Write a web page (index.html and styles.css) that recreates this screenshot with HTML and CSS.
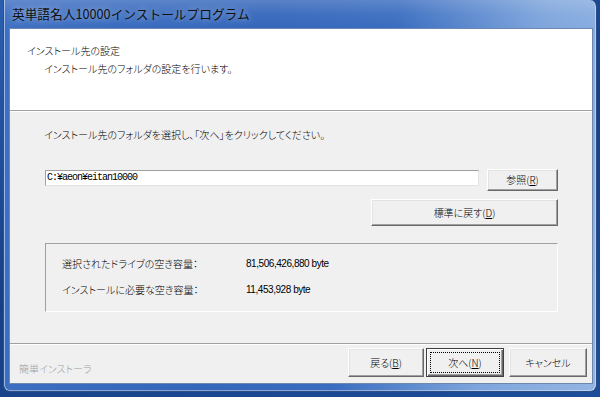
FILE: index.html
```html
<!DOCTYPE html>
<html lang="ja">
<head>
<meta charset="utf-8">
<link rel="stylesheet" href="styles.css">
</head>
<body>
<div class="window">
  <div class="titlebar">英単語名人10000インストールプログラム</div>
  <div class="client">
    <div class="header">
      <div class="h-title">インストール先の設定</div>
      <div class="h-sub">インストール先のフォルダの設定を行います。</div>
    </div>
    <div class="main">
      <div class="instr">インストール先のフォルダを選択し、「次へ」をクリックしてください。</div>
      <div class="path-row">
        <div class="path-input">C:¥aeon¥eitan10000</div>
        <div class="btn btn-browse">参照(<u>R</u>)</div>
      </div>
      <div class="default-row">
        <div class="btn btn-default">標準に戻す(<u>D</u>)</div>
      </div>
      <div class="group">
        <div class="g-row"><span class="g-label">選択されたドライブの空き容量：</span><span class="g-val">81,506,426,880 byte</span></div>
        <div class="g-row"><span class="g-label">インストールに必要な空き容量：</span><span class="g-val">11,453,928 byte</span></div>
      </div>
    </div>
    <div class="footer">
      <div class="brand">簡単インストーラ</div>
      <div class="buttons">
        <div class="btn btn-nav">戻る(<u>B</u>)</div>
        <div class="btn btn-nav btn-focus"><span class="focus">次へ(<u>N</u>)</span></div>
        <div class="btn btn-nav btn-cancel">キャンセル</div>
      </div>
    </div>
  </div>
</div>
</body>
</html>
```
FILE: styles.css
```css
html, body {
  margin: 0;
  padding: 0;
  width: 600px;
  height: 397px;
  overflow: hidden;
}
body {
  background: linear-gradient(160deg, #2a5fb0 0%, #163f86 50%, #1d4d9a 100%);
  padding-left: 3px;
  box-sizing: border-box;
  font-family: "Noto Sans CJK JP", sans-serif;
  font-feature-settings: "palt";
  font-size: 10px;
  font-weight: 300;
  color: #000;
}
.window {
  width: 594px;
  height: 392px;
  box-sizing: border-box;
  border-radius: 0 7px 7px 7px;
  border: 1px solid #2b4f86;
  border-top: none;
  background:
    linear-gradient(to bottom, rgba(255,255,255,0.18) 0px, rgba(255,255,255,0.05) 14px, rgba(0,0,0,0) 29px),
    linear-gradient(100deg, #3f70c3 0%, #3466ba 40%, #3a6dc0 60%, #7ea5dc 82%, #93b5e4 100%);
  box-shadow: inset 1px 0 0 rgba(255,255,255,0.5), inset -1px 0 0 rgba(255,255,255,0.4), inset 0 -1px 0 rgba(255,255,255,0.4);
  display: flex;
  flex-direction: column;
  padding: 0 4px 8px 6px;
}
.titlebar {
  height: 29px;
  flex: none;
  line-height: 28px;
  padding-left: 2px;
  font-size: 12.7px;
  font-weight: 400;
  font-feature-settings: normal;
  color: #101010;
  text-shadow: 0 0 6px rgba(255,255,255,0.6);
}
.client {
  flex: 1;
  background: #f0f0f0;
  display: flex;
  flex-direction: column;
  box-shadow: 0 0 0 1px #6d87ad;
}
.header {
  height: 82px;
  flex: none;
  background: #fff;
  border-bottom: 1px solid #a0a0a0;
  box-shadow: 0 1px 0 #fff;
  box-sizing: border-box;
  padding: 14px 0 0 17px;
  line-height: 16px;
}
.h-sub {
  margin-top: 2px;
  padding-left: 17px;
}
.main {
  flex: 1;
  padding: 0 34px 0 34px;
}
.instr {
  margin-top: 16px;
  line-height: 16px;
}
.path-row {
  display: flex;
  align-items: flex-start;
  margin-top: 26px;
}
.path-input {
  margin-left: 1px;
  margin-top: 1px;
  width: 435px;
  height: 16px;
  box-sizing: border-box;
  background: #fff;
  border-top: 1px solid #a0a0a0;
  border-left: 1px solid #a0a0a0;
  border-right: 1px solid #e3e3e3;
  border-bottom: 1px solid #e3e3e3;
  font-family: "Liberation Mono", monospace;
  font-weight: 400;
  font-size: 10px;
  letter-spacing: -1px;
  line-height: 14px;
  padding-left: 1px;
}
.btn {
  box-sizing: border-box;
  background: #f0f0f0;
  border-top: 1px solid #fff;
  border-left: 1px solid #fff;
  border-right: 1px solid #696969;
  border-bottom: 1px solid #696969;
  box-shadow: inset -1px -1px 0 #a0a0a0, inset 1px 1px 0 #e3e3e3;
  display: flex;
  align-items: center;
  justify-content: center;
  line-height: 14px;
}
.btn u {
  text-underline-offset: 1px;
}
.btn-browse {
  margin-left: 8px;
  width: 71px;
  height: 22px;
}
.default-row {
  display: flex;
  justify-content: flex-end;
  margin-top: 8px;
}
.btn-default {
  width: 187px;
  height: 27px;
}
.group {
  margin-top: 17px;
  margin-left: 1px;
  height: 69px;
  box-sizing: border-box;
  border-top: 1px solid #a0a0a0;
  border-left: 1px solid #a0a0a0;
  border-right: 1px solid #fff;
  border-bottom: 1px solid #fff;
  padding: 12px 0 0 16px;
}
.g-row {
  display: flex;
  line-height: 16px;
  height: 26px;
}
.g-label {
  width: 184px;
}
.g-val {
  font-family: "Liberation Sans", sans-serif;
  font-weight: 400;
  font-size: 10px;
  letter-spacing: -0.45px;
}
.footer {
  height: 35px;
  flex: none;
  border-top: 1px solid #a0a0a0;
  box-shadow: inset 0 1px 0 #fff;
  display: flex;
  justify-content: space-between;
  align-items: flex-start;
  padding: 4px 5px 0 9px;
}
.brand {
  color: #a0a0a0;
  line-height: 16px;
  margin-top: 13px;
}
.buttons {
  display: flex;
}
.btn-nav {
  width: 76px;
  height: 29px;
}
.btn-focus {
  margin-left: 2px;
  width: 78px;
  border: 1px solid #404040;
  box-shadow: inset 1px 1px 0 #fff, inset -1px -1px 0 #696969, inset -2px -2px 0 #a0a0a0;
}
.focus {
  display: flex;
  align-items: center;
  justify-content: center;
  width: 68px;
  height: 19px;
  outline: 1px dotted #000;
}
.btn-cancel {
  margin-left: 5px;
  width: 78px;
}
```
